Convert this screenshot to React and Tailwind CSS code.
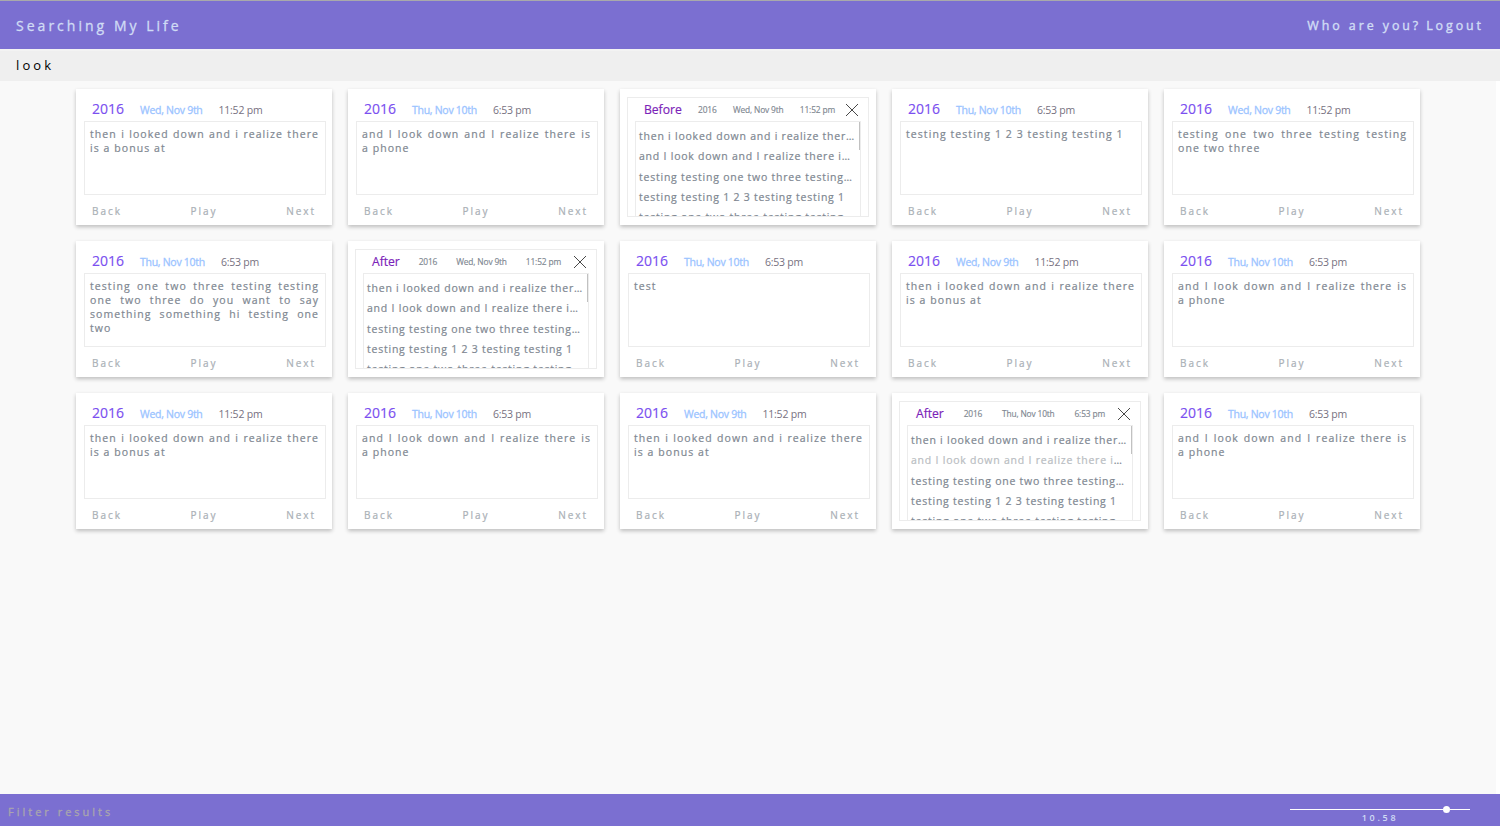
const looked = "then i looked down and i realize there is a bonus at";
const phone = "and I look down and I realize there is a phone";
const wed = { date: "Wed, Nov 9th", time: "11:52 pm" };
const thu = { date: "Thu, Nov 10th", time: "6:53 pm" };

const cards = [
  { ...wed, text: looked },
  { ...thu, text: phone },
  { ...wed, list: "Before" },
  { ...thu, text: "testing testing 1 2 3 testing testing 1" },
  { ...wed, text: "testing one two three testing testing one two three" },
  { ...thu, text: "testing one two three testing testing one two three do you want to say something something hi testing one two" },
  { ...wed, list: "After" },
  { ...thu, text: "test" },
  { ...wed, text: looked },
  { ...thu, text: phone },
  { ...wed, text: looked },
  { ...thu, text: phone },
  { ...wed, text: looked },
  { ...thu, list: "After", dimmed: 1 },
  { ...thu, text: phone },
];

const lines = [
  { text: "then i looked down and i realize ther", more: true },
  { text: "and I look down and I realize there i", more: true },
  { text: "testing testing one two three testing", more: true },
  { text: "testing testing 1 2 3 testing testing 1" },
  { text: "testing one two three testing testing", more: true },
];

function TextCard({ date, time, text }) {
  return (
    <article className="flex h-[136px] w-64 flex-col bg-white pr-1.5 pl-2 shadow-[0_2px_4px_rgba(0,0,0,0.24)]">
      <header className="flex h-8 items-baseline gap-4 pt-[10px] pl-2 leading-5 whitespace-nowrap">
        <span className="text-[14px] text-[#7b4ff0] [-webkit-text-stroke:0.15px]">2016</span>
        <span className="text-[10.5px] tracking-[-0.28px] text-[#9bc4ff] [-webkit-text-stroke:0.3px]">{date}</span>
        <span className="text-[10.5px] tracking-[-0.22px] text-[#77717f]">{time}</span>
      </header>
      <p className="h-[74px] w-[242px] border border-[#ececec] pt-[5px] pr-[6px] pl-[5px] text-justify text-[10.5px] leading-[14px] tracking-[1.07px] text-[#7e8791] [-webkit-text-stroke:0.2px]">
        {text}
      </p>
      <footer className="flex h-[30px] justify-between pt-[8px] pr-[10px] pl-2 text-[10px] leading-4 tracking-[1.95px] text-[#aab0b6] [-webkit-text-stroke:0.2px]">
        <span>Back</span>
        <span>Play</span>
        <span>Next</span>
      </footer>
    </article>
  );
}

function ListCard({ date, time, list, dimmed }) {
  return (
    <article className="h-[136px] w-64 bg-white pt-2 pl-[7px] shadow-[0_2px_4px_rgba(0,0,0,0.24)]">
      <div className="flex h-[120px] w-[242px] flex-col overflow-hidden border border-[#ececec]">
        <header className="flex h-[23px] shrink-0 items-center pt-px pr-[10px] pl-4 whitespace-nowrap">
          <div className={`flex items-center justify-between text-[8.4px] leading-[18px] tracking-[-0.16px] text-[#808791] [-webkit-text-stroke:0.15px] ${list === "After" ? "w-[189px]" : "w-[191px]"}`}>
            <span className="text-[12.2px] tracking-[-0.05px] text-[#7b22b8]">{list}</span>
            <span>2016</span>
            <span>{date}</span>
            <span>{time}</span>
          </div>
          <svg className="ml-auto h-3 w-3 shrink-0" viewBox="0 0 12 12" stroke="#333" strokeWidth="0.9">
            <path d="M0 0L12 12M12 0L0 12" />
          </svg>
        </header>
        <div className="ml-[7px] flex h-[110px] w-[226px] shrink-0 justify-between border border-[#ececec]">
          <ul className="pt-[4px] pl-[3px] text-[10.5px] leading-[20.3px] tracking-[0.77px] whitespace-nowrap text-[#7e8791] [-webkit-text-stroke:0.2px]">
            {lines.map((line, i) => (
              <li key={line.text}>
                <span className={i === dimmed ? "text-[#b9bdc2]" : ""}>{line.text}</span>
                {line.more && <span className="tracking-normal">…</span>}
              </li>
            ))}
          </ul>
          <div className="h-7 w-px bg-[#c1c1c1]" />
        </div>
      </div>
    </article>
  );
}

export default function App() {
  return (
    <div className="flex h-[826px] w-[1500px] flex-col overflow-hidden bg-white font-['Open_Sans',sans-serif]">
      <header className="flex h-[49px] shrink-0 items-center justify-between border-t border-[#a9a9ab] bg-[#7b6fd1] pr-[13px] pl-4 text-[#d0dcf5]">
        <h1 className="text-[14px] tracking-[3.02px] [-webkit-text-stroke:0.3px]">Searching My Life</h1>
        <nav className="flex gap-[5px] pt-[2px] pr-[3px] text-[12.4px] tracking-[2.95px] [-webkit-text-stroke:0.4px]">
          <span>Who are you?</span>
          <span>Logout</span>
        </nav>
      </header>
      <div className="flex h-8 shrink-0 items-center border-t-2 border-[#f3f3f3] bg-[#efefef] pl-4 text-[13px] tracking-[3.1px] text-black">look</div>
      <main className="mr-1 flex-1 bg-[#f9f9f9] pt-2 pl-[76px]">
        <div className="grid grid-cols-[repeat(5,256px)] gap-4">
          {cards.map((card, i) => (card.list ? <ListCard key={i} {...card} /> : <TextCard key={i} {...card} />))}
        </div>
      </main>
      <footer className="flex h-8 shrink-0 justify-between bg-[#7b6fd1] pr-[30px] pl-2">
        <span className="pt-[9px] text-[11px] leading-[18px] tracking-[3px] text-[#a9a5ae] [-webkit-text-stroke:0.3px]">Filter results</span>
        <div className="flex w-[180px] flex-col items-center pt-3">
          <div className="flex h-[7px] w-full items-center">
            <div className="h-px w-[153px] bg-white" />
            <div className="h-[7px] w-[7px] rounded-full bg-white" />
            <div className="h-px flex-1 bg-white" />
          </div>
          <span className="text-[9px] leading-[10px] font-semibold tracking-[2.7px] text-[#d0dcf5]">10.58</span>
        </div>
      </footer>
    </div>
  );
}
